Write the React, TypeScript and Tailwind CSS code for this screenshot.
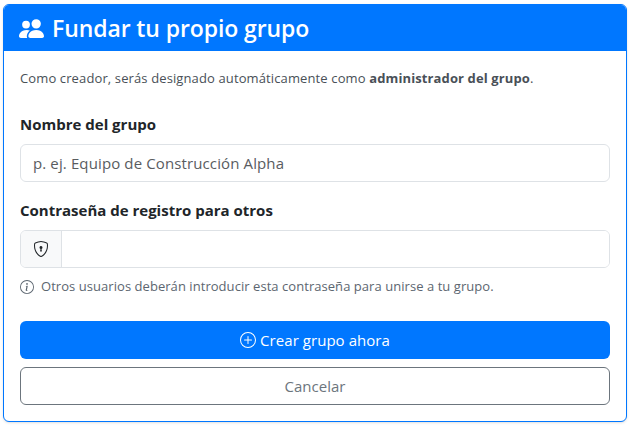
import React from "react";

function People() {
  return (
    <svg width="25" height="25" viewBox="0 0 16 16" fill="currentColor" aria-hidden="true">
      <path d="M7 14s-1 0-1-1 1-4 5-4 5 3 5 4-1 1-1 1H7Zm4-6a3 3 0 1 0 0-6 3 3 0 0 0 0 6Zm-5.784 6A2.238 2.238 0 0 1 5 13c0-1.355.68-2.750 1.936-3.720A6.325 6.325 0 0 0 5 9c-4 0-5 3-5 4s1 1 1 1h4.216ZM4.500 8a2.500 2.500 0 1 0 0-5 2.500 2.500 0 0 0 0 5Z" />
    </svg>
  );
}

function ShieldLock() {
  return (
    <svg width="16" height="16" viewBox="0 0 16 16" fill="currentColor" aria-hidden="true">
      <path d="M5.338 1.590a61 61 0 0 0-2.837.856.480.480 0 0 0-.328.390c-.554 4.157.726 7.190 2.253 9.188a10.700 10.700 0 0 0 2.287 2.233c.346.244.652.420.893.533q.180.085.293.118a1 1 0 0 0 .101.025 1 1 0 0 0 .100-.025q.114-.034.294-.118c.240-.113.547-.290.893-.533a10.700 10.700 0 0 0 2.287-2.233c1.527-1.997 2.807-5.031 2.253-9.188a.480.480 0 0 0-.328-.390c-.651-.213-1.750-.560-2.837-.855C9.552 1.290 8.531 1.067 8 1.067c-.530 0-1.552.223-2.662.524zM5.072.560C6.157.265 7.310 0 8 0s1.843.265 2.928.560c1.110.300 2.229.655 2.887.870a1.540 1.540 0 0 1 1.044 1.262c.596 4.477-.787 7.795-2.465 9.990a11.800 11.800 0 0 1-2.517 2.453 7 7 0 0 1-1.048.625c-.280.132-.580.240-.829.240s-.548-.108-.829-.240a7 7 0 0 1-1.048-.625 11.800 11.800 0 0 1-2.517-2.453C1.928 10.487.545 7.169 1.141 2.692A1.540 1.540 0 0 1 2.185 1.430 63 63 0 0 1 5.072.560z" />
      <path d="M9.500 6.500a1.500 1.500 0 0 1-1 1.415l.385 1.990a.500.500 0 0 1-.491.595h-.788a.500.500 0 0 1-.490-.595l.384-1.990a1.500 1.500 0 1 1 2-1.415z" />
    </svg>
  );
}

function InfoCircle() {
  return (
    <svg width="14" height="14" viewBox="0 0 16 16" fill="currentColor" aria-hidden="true">
      <path d="M8 15A7 7 0 1 1 8 1a7 7 0 0 1 0 14zm0 1A8 8 0 1 0 8 0a8 8 0 0 0 0 16z" />
      <path d="m8.930 6.588-2.290.287-.082.380.450.083c.294.070.352.176.288.469l-.738 3.468c-.194.897.105 1.319.808 1.319.545 0 1.178-.252 1.465-.598l.088-.416c-.200.176-.492.246-.686.246-.275 0-.375-.193-.304-.533L8.930 6.588zM9 4.500a1 1 0 1 1-2 0 1 1 0 0 1 2 0z" />
    </svg>
  );
}

function PlusCircle() {
  return (
    <svg width="16" height="16" viewBox="0 0 16 16" fill="currentColor" aria-hidden="true">
      <path d="M8 15A7 7 0 1 1 8 1a7 7 0 0 1 0 14zm0 1A8 8 0 1 0 8 0a8 8 0 0 0 0 16z" />
      <path d="M8 4a.500.500 0 0 1 .500.500v3h3a.500.500 0 0 1 0 1h-3v3a.500.500 0 0 1-1 0v-3h-3a.500.500 0 0 1 0-1h3v-3A.500.500 0 0 1 8 4z" />
    </svg>
  );
}

export default function App() {
  return (
    <div className="h-[426px] w-[630px] bg-white pt-1 pr-[3px] pb-1 pl-[3px] font-['Open_Sans','Noto_Sans',sans-serif] text-[#212529]">
      <div className="h-[418px] overflow-hidden rounded-md border border-[#0077ff] bg-white shadow-sm">
        <div className="flex h-[46px] items-center gap-[8px] bg-[#0077ff] pl-[15px] text-white">
          <People />
          <h1 className="pt-px text-[23px] font-semibold tracking-[-0.1px]">Fundar tu propio grupo</h1>
        </div>
        <div className="flex flex-col px-4 pt-4">
          <p className="h-[22px] text-[13px] leading-[22px] tracking-[0.12px] text-[#495057]">
            Como creador, serás designado automáticamente como <span className="font-bold">administrador del grupo</span>.
          </p>
          <label className="mt-[23px] h-6 text-[15px] leading-6 font-bold">Nombre del grupo</label>
          <input
            readOnly
            placeholder="p. ej. Equipo de Construcción Alpha"
            className="mt-2 h-[38px] rounded-md border border-[#dee2e6] bg-white px-3 text-[15px] tracking-[0.12px] placeholder:text-[#595c5f]"
          />
          <label className="mt-4 h-6 text-[15px] leading-6 font-bold">Contraseña de registro para otros</label>
          <div className="mt-2 flex h-[38px] overflow-hidden rounded-md border border-[#dee2e6]">
            <span className="flex w-[41px] items-center justify-center border-r border-[#dee2e6] bg-[#f8f9fa]">
              <ShieldLock />
            </span>
            <input readOnly className="min-w-0 flex-1 bg-white" />
          </div>
          <div className="mt-[10px] flex h-[18px] items-center gap-[7px] text-[13px] tracking-[0.05px] text-[#5c6670]">
            <InfoCircle />
            <span>Otros usuarios deberán introducir esta contraseña para unirse a tu grupo.</span>
          </div>
          <button className="mt-[25px] flex h-[38px] items-center justify-center gap-1 rounded-md bg-[#0077ff] text-[15px] tracking-[0.05px] text-white">
            <PlusCircle />
            Crear grupo ahora
          </button>
          <button className="mt-2 h-[38px] rounded-md border border-[#6c757d] bg-white text-[15px] text-[#6c757d]">
            Cancelar
          </button>
        </div>
      </div>
    </div>
  );
}
